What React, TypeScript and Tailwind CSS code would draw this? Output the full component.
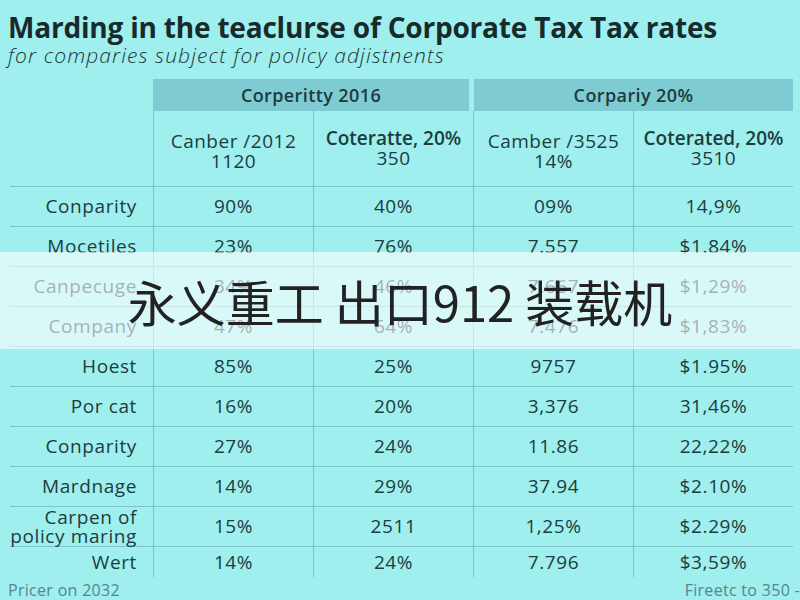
import React from "react";

const rows: [string, string, string, string, string][] = [
  ["Conparity", "90%", "40%", "09%", "14,9%"],
  ["Mocetiles", "23%", "76%", "7.557", "$1.84%"],
  ["Canpecuge", "34%", "46%", "7.667", "$1,29%"],
  ["Company", "47%", "64%", "7.476", "$1,83%"],
  ["Hoest", "85%", "25%", "9757", "$1.95%"],
  ["Por cat", "16%", "20%", "3,376", "31,46%"],
  ["Conparity", "27%", "24%", "11.86", "22,22%"],
  ["Mardnage", "14%", "29%", "37.94", "$2.10%"],
  ["Carpen of\npolicy maring", "15%", "2511", "1,25%", "$2.29%"],
  ["Wert", "14%", "24%", "7.796", "$3,59%"],
];

export default function App() {
  return (
    <div
      className="relative w-[800px] h-[600px] overflow-hidden bg-[#9eefed] text-[#1d3c40]"
      style={{ fontFamily: '"Open Sans", "Noto Sans", sans-serif' }}
    >
      <div className="pl-[8px] pt-[10px]">
        <h1 className="text-[28px] font-bold leading-[34px] text-[#172a2c] tracking-[-0.2px]">
          Marding in the teaclurse of Corporate Tax Tax rates
        </h1>
        <p className="text-[21px] italic leading-[22px] text-[#1f3538] font-light tracking-[1.1px]">
          for comparies subject for policy adjistnents
        </p>
      </div>

      <div className="ml-[10px] mt-[13px] w-[783px]">
        {/* group header */}
        <div className="grid grid-cols-[143px_320px_320px] h-[32px]">
          <div />
          <div className="bg-[#7ecbd2] mr-[4px] flex items-center justify-center text-[18px] font-semibold text-[#1d3a3f] tracking-[0.4px]">
            Corperitty 2016
          </div>
          <div className="bg-[#7ecbd2] ml-[1px] flex items-center justify-center text-[18px] font-semibold text-[#1d3a3f] tracking-[0.4px]">
            Corpariy 20%
          </div>
        </div>
        {/* sub header */}
        <div className="grid grid-cols-[143px_160px_160px_160px_160px] h-[76px] border-b border-[#7cc2c6] text-[19px] leading-[20px] tracking-[0.5px]">
          <div />
          <div className="border-l border-[#7cc2c6] flex flex-col items-center justify-center pt-[4px]">
            <span>Canber /2012</span>
            <span>1120</span>
          </div>
          <div className="border-l border-[#7cc2c6] flex flex-col items-center justify-center pb-[2px]">
            <span className="font-semibold tracking-[0px]">Coteratte, 20%</span>
            <span>350</span>
          </div>
          <div className="border-l border-[#7cc2c6] flex flex-col items-center justify-center pt-[4px]">
            <span>Camber /3525</span>
            <span>14%</span>
          </div>
          <div className="border-l border-[#7cc2c6] flex flex-col items-center justify-center pb-[2px]">
            <span className="font-semibold tracking-[0px]">Coterated, 20%</span>
            <span>3510</span>
          </div>
        </div>
        {rows.map((r, i) => (
          <div
            key={i}
            className={`grid grid-cols-[143px_160px_160px_160px_160px] text-[19px] tracking-[0.6px] ${
              i === rows.length - 1 ? "h-[30px]" : "h-[40px] border-b border-[#7cc2c6]"
            }`}
          >
            <div className="flex items-center justify-end pr-[16px] text-right leading-[19px] whitespace-pre-line">
              {r[0]}
            </div>
            {r.slice(1).map((c, j) => (
              <div
                key={j}
                className="border-l border-[#7cc2c6] flex items-center justify-center"
              >
                {c}
              </div>
            ))}
          </div>
        ))}
      </div>

      <div className="flex justify-between pl-[8px] mt-[3px] text-[16px] leading-[20px] text-[#55868b] tracking-[0.3px]">
        <span>Pricer on 2032</span>
        <span>Fireetc to 350 -</span>
      </div>

      <div className="absolute left-0 right-0 top-[252px] h-[97px] bg-white/60 flex items-center justify-center">
        <span
          className="text-[49px] text-[#222222] leading-none"
          style={{ fontFamily: '"Noto Sans CJK SC", "Noto Sans", sans-serif' }}
        >
          永义重工 出口912 装载机
        </span>
      </div>
    </div>
  );
}
